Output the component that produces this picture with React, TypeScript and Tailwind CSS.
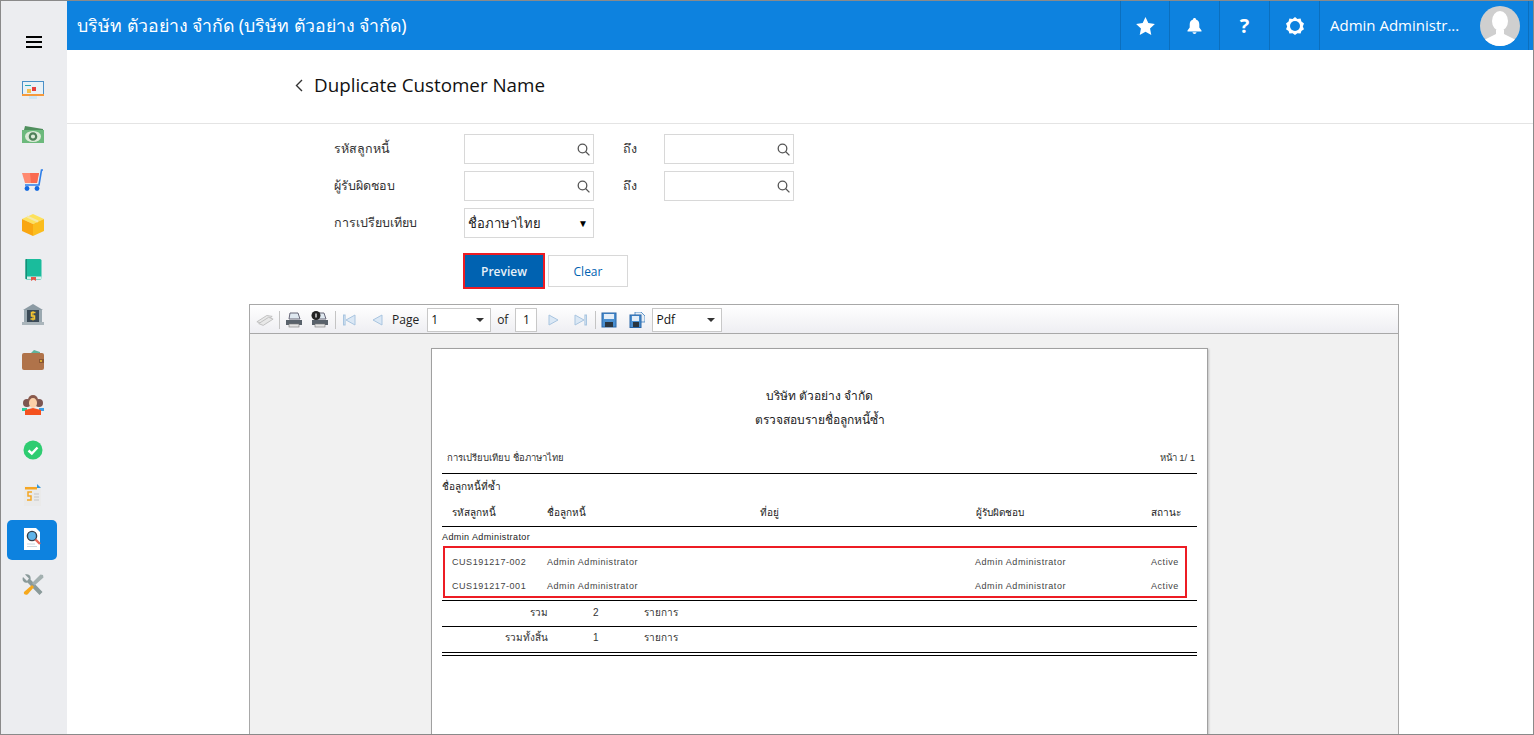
import React from 'react';

const sans = "font-['Open_Sans','Noto_Sans',sans-serif]";
const report = "font-['Liberation_Sans','Noto_Sans',sans-serif]";

function IconMonitor() {
  return (
    <svg width="22" height="20" viewBox="0 -1 22 20">
      <rect x="0" y="0" width="22" height="15" fill="#4a90c8" />
      <rect x="1" y="1" width="20" height="12" fill="#e9f1f6" />
      <rect x="0" y="13" width="22" height="2" fill="#f59a3c" />
      <rect x="10" y="6" width="4" height="4" fill="#e8413c" />
      <rect x="3" y="4" width="6" height="1" fill="#2aa7b5" />
      <rect x="5" y="8" width="4" height="4" fill="#f4c04e" />
      <rect x="7" y="15" width="8" height="3" fill="#cfe6f3" />
    </svg>
  );
}

function IconMoney() {
  return (
    <svg width="22" height="18" viewBox="0 0 22 18">
      <path d="M2 4L3 0L21 3V6Z" fill="#4f8f5d" />
      <rect x="0" y="4" width="22" height="13" fill="#6cb97c" />
      <ellipse cx="11" cy="10.5" rx="8" ry="5.5" fill="#dcebd8" />
      <circle cx="11" cy="10.5" r="3.2" fill="none" stroke="#4f8059" strokeWidth="2.2" />
    </svg>
  );
}

function IconCart() {
  return (
    <svg width="22" height="22" viewBox="0 0 22 22">
      <path d="M0 4H17L15 14H3Z" fill="#ff8a70" />
      <path d="M8 4H17L15 14H9Z" fill="#fa6a50" />
      <path d="M21 1H19.5L17 16H3" fill="none" stroke="#2f7fe8" strokeWidth="1.6" />
      <circle cx="5" cy="19.5" r="2.4" fill="#1469e0" />
      <circle cx="15" cy="19.5" r="2.4" fill="#1469e0" />
    </svg>
  );
}

function IconBox() {
  return (
    <svg width="22" height="22" viewBox="0 0 22 22">
      <path d="M11 0L22 5L11 10L0 5Z" fill="#fde25c" />
      <path d="M0 5L11 10V22L0 17Z" fill="#f9a611" />
      <path d="M22 5L11 10V22L22 17Z" fill="#fbbd1e" />
      <path d="M5 2.5L16 7.5" stroke="#f5e8a8" strokeWidth="2" />
    </svg>
  );
}

function IconBook() {
  return (
    <svg width="17" height="22" viewBox="0 0 17 22">
      <rect x="0.5" y="0" width="16" height="20.5" rx="1.5" fill="#1abc9c" />
      <rect x="1" y="17.5" width="15.5" height="2.5" fill="#d8efe9" />
      <rect x="0.5" y="0" width="1.5" height="20" fill="#148f77" />
      <path d="M6 18H11V22L8.5 20.5L6 22Z" fill="#e6584a" />
    </svg>
  );
}

function IconBank() {
  return (
    <svg width="22" height="22" viewBox="0 0 22 22">
      <path d="M11 0L21 6H1Z" fill="#8b9aa3" />
      <rect x="3" y="6" width="16" height="12" fill="#3b4a57" />
      <rect x="2" y="6" width="3" height="12" fill="#9aa8b0" />
      <rect x="17" y="6" width="3" height="12" fill="#9aa8b0" />
      <rect x="0" y="18" width="22" height="3" fill="#aab5bb" />
      <path d="M13.5 8.5H9.5V12H12.5V15H8.5" fill="none" stroke="#f4c430" strokeWidth="1.5" />
      <path d="M11 7V16.5" stroke="#f4c430" strokeWidth="1" />
    </svg>
  );
}

function IconWallet() {
  return (
    <svg width="22" height="20" viewBox="0 0 22 20">
      <path d="M8 4L12 0L18 2L18 5H8Z" fill="#5fb49c" />
      <rect x="0" y="3" width="22" height="17" rx="2" fill="#b0734a" />
      <rect x="17" y="9" width="5" height="4" fill="#8a5735" />
      <circle cx="19" cy="11" r="1" fill="#f4c430" />
    </svg>
  );
}

function IconPeople() {
  return (
    <svg width="22" height="20" viewBox="0 0 22 20">
      <circle cx="5" cy="8" r="4" fill="#7d5550" />
      <circle cx="17" cy="8" r="4" fill="#7d5550" />
      <rect x="0" y="13" width="5" height="3" fill="#2ecc9b" />
      <rect x="17" y="13" width="5" height="3" fill="#3aa0e8" />
      <circle cx="11" cy="5" r="5" fill="#8a5a4c" />
      <ellipse cx="11" cy="8" rx="4" ry="5" fill="#fcd0a8" />
      <path d="M3 20V15L11 13L19 15V20Z" fill="#f4511e" />
    </svg>
  );
}

function IconCheck() {
  return (
    <svg width="20" height="20" viewBox="0 0 20 20">
      <circle cx="10" cy="10" r="9.5" fill="#2ecc71" />
      <path d="M5.5 10.5L8.8 13.5L14.5 7.5" fill="none" stroke="#fff" strokeWidth="2.4" />
    </svg>
  );
}

function IconInvoice() {
  return (
    <svg width="20" height="22" viewBox="0 0 20 22">
      <rect x="1" y="2" width="17" height="20" fill="#eaeaea" />
      <rect x="2" y="3" width="12" height="2.5" fill="#f5a623" />
      <path d="M14 0L18 4H14Z" fill="#3498db" />
      <path d="M9 8H5V12H8V16H4" fill="none" stroke="#f5a623" strokeWidth="1.5" />
      <path d="M11 10H16M11 13H16M11 16H16" stroke="#c4c4c4" strokeWidth="1.2" />
    </svg>
  );
}

function IconSearchDoc() {
  return (
    <svg width="20" height="23" viewBox="0 0 20 23">
      <path d="M1 0H13L17 4V22H1Z" fill="#fff" />
      <circle cx="9" cy="8" r="4.6" fill="#5fb3e8" stroke="#333e4a" strokeWidth="1.4" />
      <path d="M12.5 11.5L17 16" stroke="#e8685a" strokeWidth="2.4" />
      <path d="M4 16H12M4 18.5H14" stroke="#c9d6e0" strokeWidth="1" />
    </svg>
  );
}

function IconTools() {
  return (
    <svg width="22" height="22" viewBox="0 0 22 22">
      <path d="M3 0.5L7 4.5L5 7L1 3C-.5 6.5 2 9.5 5.5 8.5L17.5 21L20.5 18L8.5 5.5C9.5 2 6.5 -.5 3 0.5Z" fill="#8a9a9a" />
      <path d="M21 1L18.5 .5L10 9L12.5 11.5L21.5 3.5Z" fill="#a3b0b0" />
      <path d="M10 11L12 13L6 20C4 22 1 20 2 18Z" fill="#f6a81c" />
    </svg>
  );
}

const sideItems = [
  <IconMonitor key="a" />,
  <IconMoney key="b" />,
  <IconCart key="c" />,
  <IconBox key="d" />,
  <IconBook key="e" />,
  <IconBank key="f" />,
  <IconWallet key="g" />,
  <IconPeople key="h" />,
  <IconCheck key="i" />,
  <IconInvoice key="j" />,
  <IconSearchDoc key="k" />,
  <IconTools key="l" />,
];

function Sidebar() {
  return (
    <aside className="flex w-[66px] shrink-0 flex-col items-center bg-[#ecedf0]">
      <div className="flex h-[66px] w-full items-start justify-center pt-[35px] pr-[1px]">
        <div className="flex w-4 flex-col gap-[3px]">
          <div className="h-[2px] bg-black" />
          <div className="h-[2px] bg-black" />
          <div className="h-[2px] bg-black" />
        </div>
      </div>
      {sideItems.map((icon, i) => (
        <div key={i} className="flex h-[45px] w-full items-center justify-center pr-[4px]">
          <div className={`flex h-10 w-[50px] items-center justify-center rounded-[5px] pl-[2px] ${i === 10 ? 'bg-[#0d82df]' : ''}`}>
            {icon}
          </div>
        </div>
      ))}
    </aside>
  );
}

function HeaderCell({ children }: { children: React.ReactNode }) {
  return (
    <div className="flex h-full w-[50px] items-center justify-center border-l border-[#0b6fbe] text-white first-of-type:w-[49px]">
      {children}
    </div>
  );
}

function Header() {
  return (
    <header className={`flex h-[49px] shrink-0 items-center bg-[#0d82df] text-white ${sans}`}>
      <p className="flex-1 pl-[10px] text-[17.7px] leading-none font-['Noto_Sans','Open_Sans',sans-serif]">
        บริษัท ตัวอย่าง จำกัด (บริษัท ตัวอย่าง จำกัด)
      </p>
      <HeaderCell>
        <svg width="19" height="18" viewBox="0 0 24 23" fill="#fff">
          <path d="M12 0L15.6 7.8L24 8.8L17.8 14.6L19.4 23L12 18.8L4.6 23L6.2 14.6L0 8.8L8.4 7.8Z" />
        </svg>
      </HeaderCell>
      <HeaderCell>
        <svg width="15" height="16" viewBox="0 0 15 16" fill="#fff">
          <path d="M7.5 0C8.5 0 9 .7 9 1.5C11.2 2.2 12.3 4 12.3 6.5V9.5L14.5 12.5V13.5H.5V12.5L2.7 9.5V6.5C2.7 4 3.8 2.2 6 1.5C6 .7 6.5 0 7.5 0Z" />
          <path d="M5.5 14.3H9.5C9.3 15.4 8.5 16 7.5 16C6.5 16 5.7 15.4 5.5 14.3Z" />
        </svg>
      </HeaderCell>
      <HeaderCell>
        <span className="text-[20px] leading-none font-bold">?</span>
      </HeaderCell>
      <HeaderCell>
        <svg width="18" height="18" viewBox="0 0 18 18">
          <path d="M9 0L11.4 1.9L14.6 1.6L15.4 4.6L18 6.5L16.8 9.4L18 12.2L15.4 14L14.6 16.4L11.4 16.3L9 18L6.6 16.3L3.4 16.4L2.6 14L0 12.2L1.2 9.4L0 6.5L2.6 4.6L3.4 1.6L6.6 1.9Z" fill="#fff" />
          <circle cx="9" cy="9" r="5" fill="#0d82df" />
        </svg>
      </HeaderCell>
      <div className="flex h-full w-[210px] items-center border-x border-[#0b6fbe] pl-[10px]">
        <span className="w-[150px] text-[15px] whitespace-nowrap">Admin Administr...</span>
        <div className="h-10 w-10 overflow-hidden rounded-full bg-[#cfcfcf]">
          <svg width="40" height="40" viewBox="0 0 40 40" fill="#fff">
            <ellipse cx="20" cy="15" rx="8" ry="10" />
            <path d="M16 24H24V28L36 34V40H4V34L16 28Z" />
          </svg>
        </div>
      </div>
      <div className="w-[4px]" />
    </header>
  );
}

function SearchIcon() {
  return (
    <svg width="13" height="13" viewBox="0 0 13 13" fill="none" stroke="#555" strokeWidth="1.3">
      <circle cx="5.5" cy="5.5" r="4.3" />
      <path d="M8.8 8.8L12.4 12.4" />
    </svg>
  );
}

function LookupInput() {
  return (
    <div className="flex h-[30px] w-[130px] items-center justify-end border border-[#d8d8d8] bg-white pr-[3px]">
      <SearchIcon />
    </div>
  );
}

function LookupRow({ label }: { label: string }) {
  return (
    <div className="flex h-[30px] items-center">
      <div className="w-[130px] text-[12.5px] text-[#333]">{label}</div>
      <LookupInput />
      <div className="w-[70px] pl-[29px] text-[12.5px] text-[#333]">ถึง</div>
      <LookupInput />
    </div>
  );
}

function FilterForm() {
  return (
    <div className={`flex flex-col gap-[7px] pt-[10px] pl-[267px] ${sans}`}>
      <LookupRow label="รหัสลูกหนี้" />
      <LookupRow label="ผู้รับผิดชอบ" />
      <div className="flex h-[30px] items-center">
        <div className="w-[130px] text-[12.5px] text-[#333]">การเปรียบเทียบ</div>
        <div className="flex h-[30px] w-[130px] items-center justify-between border border-[#d8d8d8] bg-white pr-[5px] pl-[3px] text-[13px] font-medium text-[#222]">
          <span className="pt-[2px]">ชื่อภาษาไทย</span>
          <span className="text-[10px] leading-none text-black">▼</span>
        </div>
      </div>
      <div className="mt-2 flex items-center gap-[3px] pl-[129px]">
        <div className="flex h-[36px] w-[82px] items-center justify-center border-2 border-[#ed1c24] bg-[#0062b1] pt-px text-[12px] font-semibold text-[#e8f1f8]">
          Preview
        </div>
        <div className="flex h-8 w-[80px] items-center justify-center border border-[#d8d8d8] bg-white pt-px text-[12px] font-medium text-[#0062b1]">
          Clear
        </div>
      </div>
    </div>
  );
}

function ToolSep() {
  return <div className="mx-[5px] h-[18px] w-px bg-[#c4c4c4]" />;
}

function PrinterIcon({ badge }: { badge?: boolean }) {
  return (
    <svg width="18" height="18" viewBox="0 0 18 18">
      <path d="M5 2H13L15 8H4Z" fill="#dfe8f0" stroke="#667" strokeWidth="1" />
      <path d="M1 9H17V14H1Z" fill="#59626b" />
      <rect x="4" y="13" width="10" height="3" fill="#e4e4e4" stroke="#777" strokeWidth=".6" />
      {badge && <circle cx="5" cy="4.5" r="4.5" fill="#222" />}
      {badge && <path d="M5 2.5V6.5" stroke="#fff" strokeWidth="1.2" />}
    </svg>
  );
}

function NavIcon({ dir, bar }: { dir: 'l' | 'r'; bar?: boolean }) {
  return (
    <svg width="14" height="12" viewBox="0 0 14 12" fill="#dbe8f5" stroke="#a9c5e0" strokeWidth="1">
      {dir === 'l' ? <path d="M12 1V11L3 6Z" /> : <path d="M2 1V11L11 6Z" />}
      {bar && (dir === 'l' ? <rect x="0.5" y="1" width="1.6" height="10" /> : <rect x="11.9" y="1" width="1.6" height="10" />)}
    </svg>
  );
}

function SaveIcon({ extra }: { extra?: boolean }) {
  return (
    <svg width="16" height="16" viewBox="0 0 16 16">
      {extra && <path d="M6 0H12L16 4V10H6Z" fill="#e7eef6" stroke="#3a7fc0" strokeWidth=".8" />}
      <rect x="1" y={extra ? 3 : 1} width={extra ? 11 : 14} height={extra ? 12.5 : 14} fill="#4a8fd0" stroke="#2a66a8" strokeWidth="1" />
      <rect x="3" y={extra ? 4 : 2} width={extra ? 7 : 10} height="5" fill="#e4eef8" />
      <rect x="4" y="10" width={extra ? 6 : 8} height="5" fill="#2b3640" />
    </svg>
  );
}

function ViewerSelect({ value, width }: { value: string; width: string }) {
  return (
    <div className={`flex h-6 items-center justify-between border border-[#c8c8c8] bg-white pr-[6px] pl-[3px] text-[12px] text-[#111] ${width}`}>
      <span>{value}</span>
      <span className="h-0 w-0 border-x-[4px] border-t-[4px] border-x-transparent border-t-[#333]" />
    </div>
  );
}

function ViewerToolbar() {
  return (
    <div className={`flex h-[29px] shrink-0 items-center border-b border-[#a8a8a8] bg-gradient-to-b from-white to-[#eeeef2] pt-[2px] pl-[6px] ${sans}`}>
      <svg width="18" height="14" viewBox="0 0 20 14" fill="#e8e8e8" stroke="#bcbcbc">
        <path d="M1 9L12 2L18 3L7 11Z" />
        <path d="M3 11L14 4L19 6L8 13Z" />
      </svg>
      <ToolSep />
      <PrinterIcon />
      <div className="w-2" />
      <PrinterIcon badge />
      <div className="w-px" />
      <ToolSep />
      <div className="w-[2px]" />
      <NavIcon dir="l" bar />
      <div className="w-[13px]" />
      <NavIcon dir="l" />
      <div className="w-2" />
      <span className="text-[12px] text-[#222]">Page</span>
      <div className="w-2" />
      <ViewerSelect value="1" width="w-[64px]" />
      <span className="mr-[7px] ml-[6px] text-[12px] text-[#222]">of</span>
      <div className="flex h-6 w-[22px] items-center justify-center border border-[#c8c8c8] bg-white text-[12px] text-[#111]">1</div>
      <div className="w-[10px]" />
      <NavIcon dir="r" />
      <div className="w-3" />
      <NavIcon dir="r" bar />
      <div className="w-[3px]" />
      <ToolSep />
      <SaveIcon />
      <div className="w-3" />
      <SaveIcon extra />
      <div className="w-[7px]" />
      <ViewerSelect value="Pdf" width="w-[70px]" />
    </div>
  );
}

const rptCols = 'grid grid-cols-[95px_213px_216px_175px_1fr]';

function CustomerRow({ code }: { code: string }) {
  return (
    <div className={`${rptCols} h-6 shrink-0 items-center pl-[7px] text-[9px] tracking-[0.55px] text-[#444]`}>
      <span>{code}</span>
      <span>Admin Administrator</span>
      <span />
      <span className="-ml-px">Admin Administrator</span>
      <span>Active</span>
    </div>
  );
}

function SummaryRow({ label, count }: { label: string; count: string }) {
  return (
    <div className="flex items-center text-[10px] text-[#333]">
      <span className="w-[106px] text-right">{label}</span>
      <span className="ml-[45px] w-[51px]">{count}</span>
      <span>รายการ</span>
    </div>
  );
}

function ReportPage() {
  return (
    <div className={`mt-[14px] ml-[181px] h-[500px] w-[777px] shrink-0 border border-[#a0a0a0] bg-white pt-[40px] pr-[10px] pl-[10px] shadow-[1px_1px_2px_rgba(0,0,0,0.2)] ${report}`}>
      <div className="flex flex-col items-center gap-[9px] text-[12px] leading-[15px] text-[#222]">
        <div>บริษัท ตัวอย่าง จำกัด</div>
        <div>ตรวจสอบรายชื่อลูกหนี้ซ้ำ</div>
      </div>
      <div className="mt-[22px] flex h-[16px] items-center justify-between pr-[2px] pl-[5px] text-[9.5px] text-[#333]">
        <span>การเปรียบเทียบ ชื่อภาษาไทย</span>
        <span>หน้า 1/ 1</span>
      </div>
      <div className="mt-[7px] border-t border-black pt-[6px] text-[10px] leading-[14px] text-[#222]">
        ชื่อลูกหนี้ที่ซ้ำ
      </div>
      <div className={`${rptCols} mt-[10px] h-[23px] items-center border-b border-black pb-[6px] pl-[10px] text-[10px] text-[#222]`}>
        <span>รหัสลูกหนี้</span>
        <span>ชื่อลูกหนี้</span>
        <span>ที่อยู่</span>
        <span>ผู้รับผิดชอบ</span>
        <span>สถานะ</span>
      </div>
      <div className="mt-1 h-[15px] text-[9px] leading-[12px] tracking-[0.4px] text-[#222]">Admin Administrator</div>
      <div className="mr-[10px] ml-px flex h-[52px] flex-col overflow-hidden border-2 border-[#ed1c24] pt-[3px]">
        <CustomerRow code="CUS191217-002" />
        <CustomerRow code="CUS191217-001" />
      </div>
      <div className="mt-[2px] flex h-[26px] items-center border-t border-black pb-[2px]">
        <SummaryRow label="รวม" count="2" />
      </div>
      <div className="flex h-[26px] items-center border-t border-black pb-1">
        <SummaryRow label="รวมทั้งสิ้น" count="1" />
      </div>
      <div className="h-1 border-y border-black" />
    </div>
  );
}

function ReportViewer() {
  return (
    <div className="mt-[15px] ml-[182px] flex h-[431px] w-[1150px] flex-col overflow-hidden border border-b-0 border-[#a8a8a8] bg-[#f1f1f1]">
      <ViewerToolbar />
      <ReportPage />
    </div>
  );
}

export default function App() {
  return (
    <div className="flex h-[735px] w-[1534px] overflow-hidden border border-[#8a8a8a] bg-white">
      <Sidebar />
      <main className="flex min-w-0 flex-1 flex-col">
        <Header />
        <div className={`flex h-[74px] shrink-0 items-center gap-[11px] border-b border-[#e4e4e4] pb-[2px] pl-[228px] ${sans}`}>
          <svg width="8" height="13" viewBox="0 0 8 13" fill="none" stroke="#333" strokeWidth="1.4">
            <path d="M7 1L1.5 6.5L7 12" />
          </svg>
          <h1 className="text-[18.8px] leading-none text-[#111]">Duplicate Customer Name</h1>
        </div>
        <FilterForm />
        <ReportViewer />
      </main>
    </div>
  );
}
